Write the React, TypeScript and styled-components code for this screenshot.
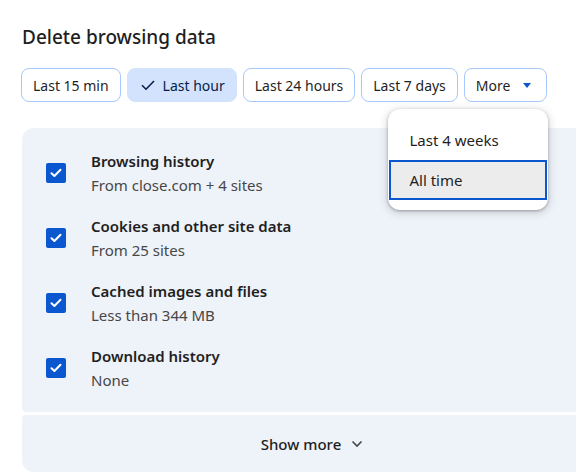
import React from "react";
import styled, { createGlobalStyle } from "styled-components";

const Global = createGlobalStyle`
  html, body {
    margin: 0;
    padding: 0;
    background: #ffffff;
    overflow: hidden;
  }
  body {
    font-family: "Noto Sans", "Open Sans", sans-serif;
    color: #1f1f1f;
  }
`;

const Page = styled.div`
  width: 576px;
  height: 472px;
  padding: 24px 0 0 22px;
  box-sizing: border-box;
  position: relative;
`;

const Title = styled.h1`
  margin: 0;
  font-size: 19px;
  line-height: 26px;
  font-weight: 500;
  color: #1f1f1f;
`;

const ChipRow = styled.div`
  display: flex;
  gap: 6px;
  margin-top: 18px;
  margin-left: -1px;
  position: relative;
  width: max-content;
`;

const Chip = styled.button<{ $selected?: boolean; $menu?: boolean }>`
  display: inline-flex;
  align-items: center;
  gap: 8px;
  height: 34px;
  box-sizing: border-box;
  padding: 0 ${(p) => (p.$menu ? "14px" : "11px")} 0 ${(p) => (p.$selected ? "13px" : "11px")};
  border-radius: 8px;
  border: 1px solid ${(p) => (p.$selected ? "#d3e3fd" : "#a8c7fa")};
  background: ${(p) => (p.$selected ? "#d3e3fd" : "#ffffff")};
  color: ${(p) => (p.$selected ? "#041e49" : "#1f1f1f")};
  font-family: inherit;
  font-size: 14px;
  font-weight: 400;
  cursor: pointer;
`;

const Menu = styled.div`
  position: absolute;
  top: 41px;
  right: -1px;
  width: 160px;
  box-sizing: border-box;
  padding: 11px 0 10px;
  background: #ffffff;
  border-radius: 12px;
  box-shadow: 0 1px 3px rgba(0, 0, 0, 0.3), 0 2px 8px 2px rgba(0, 0, 0, 0.12);
  z-index: 2;
`;

const MenuItem = styled.div<{ $active?: boolean }>`
  height: 40px;
  box-sizing: border-box;
  display: flex;
  align-items: center;
  padding-left: 18px;
  font-size: 15px;
  color: #1f1f1f;
  background: ${(p) => (p.$active ? "#ececec" : "transparent")};
  border: 2px solid ${(p) => (p.$active ? "#0b57d0" : "transparent")};
  margin: 0 1px;
`;

const Panel = styled.div`
  margin-top: 26px;
  width: 580px;
  box-sizing: border-box;
  background: #eef2f9;
  border-radius: 12px 12px 4px 4px;
  padding: 21px 0 20px 24px;
  display: flex;
  flex-direction: column;
  gap: 17px;
`;

const Row = styled.div`
  display: flex;
  align-items: center;
  gap: 25px;
`;

const Check = styled.span`
  width: 20px;
  height: 20px;
  border-radius: 2px;
  background: #0b57d0;
  display: inline-flex;
  align-items: center;
  justify-content: center;
  flex: none;
`;

const RowText = styled.div`
  display: flex;
  flex-direction: column;
`;

const RowTitle = styled.div`
  font-size: 15px;
  line-height: 24px;
  font-weight: 600;
  color: #1f1f1f;
`;

const RowSub = styled.div`
  font-size: 15px;
  line-height: 24px;
  color: #474747;
`;

const Footer = styled.div`
  margin-top: 3px;
  width: 580px;
  height: 57px;
  box-sizing: border-box;
  background: #eef2f9;
  border-radius: 4px 4px 12px 12px;
  display: flex;
  align-items: center;
  justify-content: center;
  gap: 10px;
  font-size: 15px;
  font-weight: 500;
  color: #1f1f1f;
`;

const CheckMark = () => (
  <svg width="12" height="10" viewBox="0 0 12 10" fill="none">
    <path d="M1.5 5.2 L4.4 8 L10.5 1.8" stroke="#fff" strokeWidth="2" strokeLinecap="round" strokeLinejoin="round" />
  </svg>
);

const TickIcon = () => (
  <svg width="14" height="12" viewBox="0 0 14 12" fill="none">
    <path d="M1 6.3 L5 10.2 L13 2" stroke="#041e49" strokeWidth="1.6" />
  </svg>
);

const Caret = () => (
  <svg width="10" height="5" viewBox="0 0 10 5" style={{ marginLeft: 4 }}>
    <path d="M1 0 L9 0 L5 5 Z" fill="#0b57d0" />
  </svg>
);

const Chevron = () => (
  <svg width="12" height="8" viewBox="0 0 12 8" fill="none">
    <path d="M1.5 1.5 L6 6 L10.5 1.5" stroke="#474747" strokeWidth="1.6" />
  </svg>
);

const rows = [
  { title: "Browsing history", sub: "From close.com + 4 sites" },
  { title: "Cookies and other site data", sub: "From 25 sites" },
  { title: "Cached images and files", sub: "Less than 344 MB" },
  { title: "Download history", sub: "None" },
];

export default function App() {
  return (
    <>
      <Global />
      <Page>
        <Title>Delete browsing data</Title>
        <ChipRow>
          <Chip>Last 15 min</Chip>
          <Chip $selected>
            <TickIcon />
            Last hour
          </Chip>
          <Chip>Last 24 hours</Chip>
          <Chip>Last 7 days</Chip>
          <Chip $menu>
            More
            <Caret />
          </Chip>
          <Menu>
            <MenuItem>Last 4 weeks</MenuItem>
            <MenuItem $active>All time</MenuItem>
          </Menu>
        </ChipRow>
        <Panel>
          {rows.map((r) => (
            <Row key={r.title}>
              <Check>
                <CheckMark />
              </Check>
              <RowText>
                <RowTitle>{r.title}</RowTitle>
                <RowSub>{r.sub}</RowSub>
              </RowText>
            </Row>
          ))}
        </Panel>
        <Footer>
          Show more
          <Chevron />
        </Footer>
      </Page>
    </>
  );
}
